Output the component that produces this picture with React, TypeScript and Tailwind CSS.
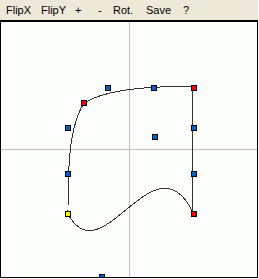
import React from 'react';

const items = [
  { label: 'FlipX', w: 'w-[35px]' },
  { label: 'FlipY', w: 'w-[34px]' },
  { label: '+', w: 'w-[23px]' },
  { label: '-', w: 'w-[15px]' },
  { label: 'Rot.', w: 'w-[33px]' },
  { label: 'Save', w: 'w-[37px]' },
  { label: '?', w: 'w-[20px]' },
];

// handles in canvas coordinates (inner area, origin at top-left inside border)
const handles: { x: number; y: number; fill: string }[] = [
  { x: 107, y: 66, fill: '#0062cc' },
  { x: 153, y: 66, fill: '#0062cc' },
  { x: 193, y: 66, fill: '#ff0000' },
  { x: 83, y: 81, fill: '#ff0000' },
  { x: 67, y: 106, fill: '#0062cc' },
  { x: 154, y: 115, fill: '#0062cc' },
  { x: 193, y: 106, fill: '#0062cc' },
  { x: 67, y: 152, fill: '#0062cc' },
  { x: 193, y: 152, fill: '#0062cc' },
  { x: 67, y: 192, fill: '#ffff00' },
  { x: 193, y: 192, fill: '#ff0000' },
  { x: 101, y: 255, fill: '#0062cc' },
];

export default function App() {
  return (
    <div className="w-[258px] flex flex-col font-['Liberation_Sans',sans-serif]">
      <div className="h-[20px] bg-[#ece9d8] flex items-center pl-[6px] text-[11px] text-black">
        {items.map((it) => (
          <span key={it.label} className={`${it.w} shrink-0`}>{it.label}</span>
        ))}
      </div>
      <div className="h-[258px] border border-t-2 border-black bg-[#fbfefb] overflow-hidden">
        <svg width="256" height="255" viewBox="0 0 256 255" className="block">
          <line x1="128.5" y1="0" x2="128.5" y2="255" stroke="#c0c0c0" strokeWidth="1" />
          <line x1="0" y1="127.5" x2="256" y2="127.5" stroke="#c0c0c0" strokeWidth="1" />
          <path
            d="M 83 81 C 107 66, 153 64, 191.5 64.5 L 191.5 189.5 C 153 113, 101 255, 67 192 C 67 152, 67 106, 83 81 Z"
            fill="none"
            stroke="#333333"
            strokeWidth="1"
            shapeRendering="crispEdges"
          />
          {handles.map((h, i) => (
            <rect
              key={i}
              x={h.x - 2.5}
              y={h.y - 2.5}
              width="5"
              height="5"
              fill={h.fill}
              stroke="#000"
              strokeWidth="1"
            />
          ))}
        </svg>
      </div>
    </div>
  );
}
